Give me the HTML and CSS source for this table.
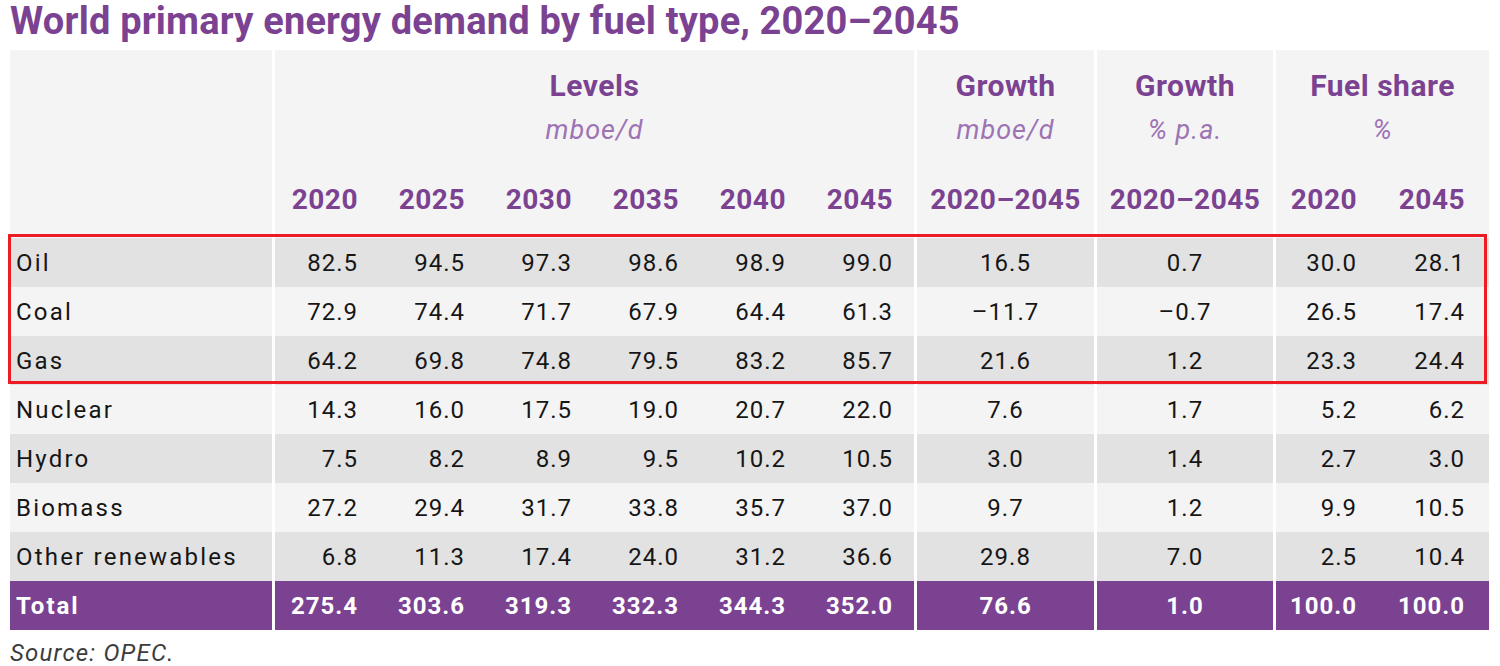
FILE: index.html
```html
<!DOCTYPE html>
<html lang="en">
<head>
<meta charset="utf-8">
<title>World primary energy demand by fuel type, 2020–2045</title>
<link rel="stylesheet" href="styles.css">
</head>
<body>
<div class="page">
  <h1 class="title">World primary energy demand by fuel type, 2020–2045</h1>
  <div class="table-wrap">
    <table class="data">
      <colgroup>
        <col class="c-label">
        <col class="c-lvl"><col class="c-lvl"><col class="c-lvl"><col class="c-lvl"><col class="c-lvl"><col class="c-lvl">
        <col class="c-gr">
        <col class="c-grp">
        <col class="c-fs"><col class="c-fs">
      </colgroup>
      <thead>
        <tr class="h-top">
          <th class="lab"></th>
          <th colspan="6" class="grp sep"><div class="gname">Levels</div><div class="gunit">mboe/d</div></th>
          <th class="grp sep"><div class="gname">Growth</div><div class="gunit">mboe/d</div></th>
          <th class="grp sep"><div class="gname">Growth</div><div class="gunit">% p.a.</div></th>
          <th colspan="2" class="grp sep"><div class="gname">Fuel share</div><div class="gunit">%</div></th>
        </tr>
        <tr class="h-years">
          <th class="lab"></th>
          <th class="num sep">2020</th><th class="num">2025</th><th class="num">2030</th><th class="num">2035</th><th class="num">2040</th><th class="num">2045</th>
          <th class="ctr sep">2020–2045</th>
          <th class="ctr sep">2020–2045</th>
          <th class="fs sep">2020</th><th class="fs">2045</th>
        </tr>
      </thead>
      <tbody>
        <tr class="dark">
          <td class="lab">Oil</td>
          <td class="num sep">82.5</td><td class="num">94.5</td><td class="num">97.3</td><td class="num">98.6</td><td class="num">98.9</td><td class="num">99.0</td>
          <td class="ctr sep">16.5</td><td class="ctr sep">0.7</td>
          <td class="fs sep">30.0</td><td class="fs">28.1</td>
        </tr>
        <tr class="light">
          <td class="lab">Coal</td>
          <td class="num sep">72.9</td><td class="num">74.4</td><td class="num">71.7</td><td class="num">67.9</td><td class="num">64.4</td><td class="num">61.3</td>
          <td class="ctr sep">–11.7</td><td class="ctr sep">–0.7</td>
          <td class="fs sep">26.5</td><td class="fs">17.4</td>
        </tr>
        <tr class="dark">
          <td class="lab">Gas</td>
          <td class="num sep">64.2</td><td class="num">69.8</td><td class="num">74.8</td><td class="num">79.5</td><td class="num">83.2</td><td class="num">85.7</td>
          <td class="ctr sep">21.6</td><td class="ctr sep">1.2</td>
          <td class="fs sep">23.3</td><td class="fs">24.4</td>
        </tr>
        <tr class="light">
          <td class="lab">Nuclear</td>
          <td class="num sep">14.3</td><td class="num">16.0</td><td class="num">17.5</td><td class="num">19.0</td><td class="num">20.7</td><td class="num">22.0</td>
          <td class="ctr sep">7.6</td><td class="ctr sep">1.7</td>
          <td class="fs sep">5.2</td><td class="fs">6.2</td>
        </tr>
        <tr class="dark">
          <td class="lab">Hydro</td>
          <td class="num sep">7.5</td><td class="num">8.2</td><td class="num">8.9</td><td class="num">9.5</td><td class="num">10.2</td><td class="num">10.5</td>
          <td class="ctr sep">3.0</td><td class="ctr sep">1.4</td>
          <td class="fs sep">2.7</td><td class="fs">3.0</td>
        </tr>
        <tr class="light">
          <td class="lab">Biomass</td>
          <td class="num sep">27.2</td><td class="num">29.4</td><td class="num">31.7</td><td class="num">33.8</td><td class="num">35.7</td><td class="num">37.0</td>
          <td class="ctr sep">9.7</td><td class="ctr sep">1.2</td>
          <td class="fs sep">9.9</td><td class="fs">10.5</td>
        </tr>
        <tr class="dark">
          <td class="lab">Other renewables</td>
          <td class="num sep">6.8</td><td class="num">11.3</td><td class="num">17.4</td><td class="num">24.0</td><td class="num">31.2</td><td class="num">36.6</td>
          <td class="ctr sep">29.8</td><td class="ctr sep">7.0</td>
          <td class="fs sep">2.5</td><td class="fs">10.4</td>
        </tr>
        <tr class="total">
          <td class="lab">Total</td>
          <td class="num sep">275.4</td><td class="num">303.6</td><td class="num">319.3</td><td class="num">332.3</td><td class="num">344.3</td><td class="num">352.0</td>
          <td class="ctr sep">76.6</td><td class="ctr sep">1.0</td>
          <td class="fs sep">100.0</td><td class="fs">100.0</td>
        </tr>
      </tbody>
    </table>
    <div class="highlight"></div>
  </div>
  <p class="source">Source: OPEC.</p>
</div>
</body>
</html>
```

FILE: styles.css
```css
html, body {
  margin: 0;
  padding: 0;
  background: #ffffff;
}

.page {
  padding: 0 0 0 10px;
  font-family: Roboto, "Liberation Sans", sans-serif;
  color: #161616;
}

.title {
  margin: 0;
  height: 50px;
  line-height: 42px;
  font-size: 38px;
  font-weight: 700;
  color: #7b4292;
  letter-spacing: 0.2px;
  white-space: nowrap;
}

.table-wrap {
  position: relative;
  width: 1479px;
}

.data {
  width: 1479px;
  table-layout: fixed;
  border-collapse: separate;
  border-spacing: 0;
}

.c-label { width: 262px; }
.c-lvl { width: 107px; }
.c-gr { width: 180px; }
.c-grp { width: 179px; }
.c-fs { width: 108px; }

.data th, .data td {
  padding: 0;
  white-space: nowrap;
}

.sep {
  border-left: 3px solid #ffffff;
}

thead th {
  background: #f4f4f4;
  color: #7b4292;
  font-weight: 700;
}

.h-top th {
  height: 111px;
  vertical-align: top;
  text-align: center;
  padding-top: 14px;
}

.gname {
  font-size: 30px;
  line-height: 44px;
  font-weight: 700;
  letter-spacing: 0.5px;
}

.gunit {
  font-size: 27px;
  line-height: 44px;
  font-weight: 400;
  font-style: italic;
  color: #9d73b4;
  letter-spacing: 1px;
}

.h-years th {
  height: 56px;
  vertical-align: top;
  padding-top: 7px;
  line-height: 36px;
  font-size: 28px;
  letter-spacing: 0.5px;
}

tbody td {
  height: 49px;
  font-size: 24px;
  letter-spacing: 1px;
  vertical-align: middle;
}

.num {
  text-align: right;
  padding-right: 21px !important;
}

.ctr {
  text-align: center;
}

.fs {
  text-align: right;
  padding-right: 24px !important;
}

.lab {
  text-align: left;
  padding-left: 6px !important;
  letter-spacing: 2.2px;
}

tr.dark td {
  background: #e2e2e2;
}

tr.light td {
  background: #f4f4f4;
}

tr.total td {
  background: #7b4292;
  color: #ffffff;
  font-weight: 700;
  letter-spacing: 1px;
}

tr.total td.lab {
  letter-spacing: 2px;
}

.highlight {
  position: absolute;
  left: -2px;
  top: 184px;
  width: 1473px;
  height: 144px;
  border: 3px solid #ed1c24;
  pointer-events: none;
}

.source {
  margin: 9px 0 0 0;
  font-size: 24px;
  line-height: 28px;
  font-style: italic;
  color: #3c3c3c;
  letter-spacing: 1.2px;
}
```
